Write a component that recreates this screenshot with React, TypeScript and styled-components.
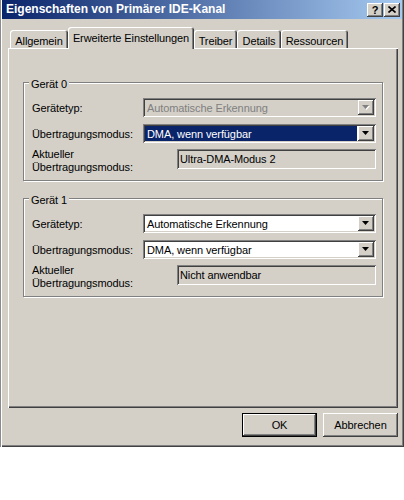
import React from 'react';
import styled, { createGlobalStyle } from 'styled-components';

const Global = createGlobalStyle`
  html, body { margin: 0; padding: 0; background: #fff; }
  body { font-family: "Liberation Sans", Arial, sans-serif; font-size: 11px; letter-spacing: -0.1px; color: #000; }
`;

const raised = `box-shadow: inset -1px -1px #404040, inset 1px 1px #fff, inset -2px -2px #808080, inset 2px 2px #d4d0c8;`;
const sunken = `box-shadow: inset 1px 1px #808080, inset -1px -1px #fff, inset 2px 2px #404040, inset -2px -2px #d4d0c8;`;

const Window = styled.div`
  width: 404px;
  height: 447px;
  box-sizing: border-box;
  background: #d4d0c8;
  padding: 0 2px;
  display: flex;
  flex-direction: column;
  box-shadow: inset 1px 0 #8a8a8a, inset 2px 0 #fff, inset -1px -1px #404040, inset -2px -2px #808080;
`;

const TitleBar = styled.div`
  height: 19px;
  display: flex;
  align-items: center;
  padding: 0 2px 0 4px;
  background: linear-gradient(to right, #0a246a, #a6caf0);
  color: #fff;
  font-weight: bold;
  font-size: 12px;
  letter-spacing: 0;
  line-height: 19px;
`;

const TitleText = styled.div`
  flex: 1;
  white-space: nowrap;
`;

const TitleButtons = styled.div`
  display: flex;
  gap: 1px;
`;

const CaptionButton = styled.div`
  width: 16px;
  height: 14px;
  box-sizing: border-box;
  background: #d4d0c8;
  ${raised}
  display: flex;
  align-items: center;
  justify-content: center;
  color: #000;
  font-weight: bold;
  font-size: 11px;
  line-height: 14px;
`;

const Body = styled.div`
  flex: 1;
  display: flex;
  flex-direction: column;
  padding: 8px 4px 0 6px;
`;

const TabRow = styled.div`
  height: 21px;
  display: flex;
  align-items: flex-end;
  padding-left: 2px;
  position: relative;
  z-index: 1;
`;

const Tab = styled.div<{ $active?: boolean; $w: number }>`
  width: ${p => p.$w}px;
  height: ${p => (p.$active ? 22 : 18)}px;
  margin-bottom: ${p => (p.$active ? -1 : 0)}px;
  box-sizing: border-box;
  padding-top: 2px;
  text-align: center;
  line-height: 18px;
  white-space: nowrap;
  background: #d4d0c8;
  border-radius: 3px 3px 0 0;
  box-shadow: inset 1px 1px #fff, inset -1px 0 #404040, inset -2px 0 #808080;
`;

const Panel = styled.div`
  height: 360px;
  box-sizing: border-box;
  padding: 34px 15px 0 15px;
  box-shadow: inset 1px 1px #fff, inset -1px -1px #404040, inset -2px -2px #808080;
  display: flex;
  flex-direction: column;
  gap: 17px;
`;

const Group = styled.div`
  border: 1px solid #808080;
  box-shadow: inset 1px 1px #fff, 1px 1px 0 #fff;
  padding: 0 6px 7px 8px;
  display: flex;
  flex-direction: column;
`;

const Caption = styled.div`
  align-self: flex-start;
  margin: -5px 0 0 -3px;
  padding: 0 2px;
  background: #d4d0c8;
  line-height: 13px;
`;

const Row = styled.div<{ $top: number; $tall?: boolean }>`
  display: flex;
  align-items: ${p => (p.$tall ? 'flex-start' : 'center')};
  margin-top: ${p => p.$top}px;
  height: ${p => (p.$tall ? 26 : 19)}px;
`;

const Label = styled.div<{ $multi?: boolean }>`
  width: 111px;
  flex-shrink: 0;
  white-space: nowrap;
  line-height: ${p => (p.$multi ? 13 : 19)}px;
  padding-top: 1px;
`;

const Combo = styled.div<{ $disabled?: boolean }>`
  flex: 1;
  height: 19px;
  box-sizing: border-box;
  padding: 2px;
  display: flex;
  background: ${p => (p.$disabled ? '#d4d0c8' : '#fff')};
  ${sunken}
`;

const ComboText = styled.div<{ $selected?: boolean; $disabled?: boolean }>`
  flex: 1;
  margin-right: 1px;
  padding-left: 2px;
  line-height: 16px;
  white-space: nowrap;
  overflow: hidden;
  background: ${p => (p.$selected ? '#0a246a' : 'transparent')};
  color: ${p => (p.$selected ? '#fff' : p.$disabled ? '#808080' : '#000')};
`;

const ArrowButton = styled.div`
  width: 16px;
  height: 15px;
  box-sizing: border-box;
  background: #d4d0c8;
  ${raised}
  display: flex;
  align-items: center;
  justify-content: center;
`;

const Field = styled.div`
  flex: 1;
  margin: 2px 0 0 34px;
  height: 20px;
  box-sizing: border-box;
  padding-left: 3px;
  line-height: 21px;
  white-space: nowrap;
  background: #d4d0c8;
  ${sunken}
`;

const ButtonRow = styled.div`
  display: flex;
  justify-content: flex-end;
  gap: 6px;
  margin-top: 5px;
`;

const Button = styled.div<{ $default?: boolean }>`
  width: 75px;
  height: 24px;
  box-sizing: border-box;
  text-align: center;
  line-height: 24px;
  background: #d4d0c8;
  ${p =>
    p.$default
      ? 'box-shadow: inset 0 0 0 1px #000, inset -2px -2px #404040, inset 2px 2px #fff, inset -3px -3px #808080;'
      : raised}
`;

const Arrow = ({ disabled }: { disabled?: boolean }) => (
  <svg width="8" height="5" viewBox="0 0 8 5">
    {disabled && <polygon points="1,1 8,1 4.5,5" fill="#fff" />}
    <polygon points="0,0 7,0 3.5,4" fill={disabled ? '#808080' : '#000'} />
  </svg>
);

const CloseGlyph = () => (
  <svg width="8" height="7" viewBox="0 0 8 7">
    <path d="M0.5 0.5 L7.5 6.5 M7.5 0.5 L0.5 6.5" stroke="#000" strokeWidth="1.6" />
  </svg>
);

type Device = {
  name: string;
  typeDisabled: boolean;
  current: string;
};

const devices: Device[] = [
  { name: 'Gerät 0', typeDisabled: true, current: 'Ultra-DMA-Modus 2' },
  { name: 'Gerät 1', typeDisabled: false, current: 'Nicht anwendbar' },
];

const tabs = [
  { label: 'Allgemein', w: 58 },
  { label: 'Erweiterte Einstellungen', w: 126, active: true },
  { label: 'Treiber', w: 43 },
  { label: 'Details', w: 44 },
  { label: 'Ressourcen', w: 67 },
];

export default function App() {
  return (
    <>
      <Global />
      <Window>
        <TitleBar>
          <TitleText>Eigenschaften von Primärer IDE-Kanal</TitleText>
          <TitleButtons>
            <CaptionButton>?</CaptionButton>
            <CaptionButton>
              <CloseGlyph />
            </CaptionButton>
          </TitleButtons>
        </TitleBar>
        <Body>
          <TabRow>
            {tabs.map(t => (
              <Tab key={t.label} $w={t.w} $active={t.active}>
                {t.label}
              </Tab>
            ))}
          </TabRow>
          <Panel>
            {devices.map((d, i) => (
              <Group key={d.name}>
                <Caption>{d.name}</Caption>
                <Row $top={7}>
                  <Label>Gerätetyp:</Label>
                  <Combo $disabled={d.typeDisabled}>
                    <ComboText $disabled={d.typeDisabled}>Automatische Erkennung</ComboText>
                    <ArrowButton>
                      <Arrow disabled={d.typeDisabled} />
                    </ArrowButton>
                  </Combo>
                </Row>
                <Row $top={7}>
                  <Label>Übertragungsmodus:</Label>
                  <Combo>
                    <ComboText $selected={i === 0}>DMA, wenn verfügbar</ComboText>
                    <ArrowButton>
                      <Arrow />
                    </ArrowButton>
                  </Combo>
                </Row>
                <Row $top={4} $tall>
                  <Label $multi>
                    Aktueller
                    <br />
                    Übertragungsmodus:
                  </Label>
                  <Field>{d.current}</Field>
                </Row>
              </Group>
            ))}
          </Panel>
          <ButtonRow>
            <Button $default>OK</Button>
            <Button>Abbrechen</Button>
          </ButtonRow>
        </Body>
      </Window>
    </>
  );
}
